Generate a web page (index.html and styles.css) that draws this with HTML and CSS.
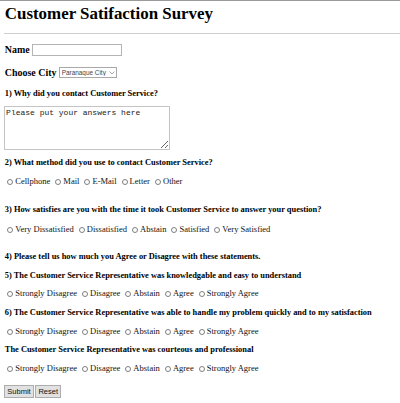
FILE: index.html
```html
<!DOCTYPE html>
<html lang="en">
<head>
<meta charset="utf-8">
<title>Customer Satifaction Survey</title>
<link rel="stylesheet" href="styles.css">
</head>
<body>
<form class="page">
  <h1 class="title">Customer Satifaction Survey</h1>
  <hr class="rule">
  <div class="field field-name">
    <label class="field-label" for="name">Name</label>
    <input class="text-input" id="name" type="text">
  </div>
  <div class="field field-city">
    <label class="field-label" for="city">Choose City</label>
    <span class="select-wrap">
      <select class="city-select" id="city">
        <option>Paranaque City</option>
      </select>
      <svg class="chevron" viewBox="0 0 10 6" width="10" height="6" aria-hidden="true"><path d="M1 1 L5 5 L9 1" fill="none" stroke="#8a8a8a" stroke-width="1.3"/></svg>
    </span>
  </div>
  <h4 class="question q1">1) Why did you contact Customer Service?</h4>
  <textarea class="answer" placeholder="Please put your answers here"></textarea>
  <h4 class="question q2">2) What method did you use to contact Customer Service?</h4>
  <div class="options o2">
    <label class="option"><input type="radio" name="method">Cellphone</label>
    <label class="option"><input type="radio" name="method">Mail</label>
    <label class="option"><input type="radio" name="method">E-Mail</label>
    <label class="option"><input type="radio" name="method">Letter</label>
    <label class="option"><input type="radio" name="method">Other</label>
  </div>
  <h4 class="question q3">3) How satisfies are you with the time it took Customer Service to answer your question?</h4>
  <div class="options o3">
    <label class="option"><input type="radio" name="time">Very Dissatisfied</label>
    <label class="option"><input type="radio" name="time">Dissatisfied</label>
    <label class="option"><input type="radio" name="time">Abstain</label>
    <label class="option"><input type="radio" name="time">Satisfied</label>
    <label class="option"><input type="radio" name="time">Very Satisfied</label>
  </div>
  <h4 class="question q4">4) Please tell us how much you Agree or Disagree with these statements.</h4>
  <h4 class="question q5">5) The Customer Service Representative was knowledgable and easy to understand</h4>
  <div class="options o5">
    <label class="option"><input type="radio" name="know">Strongly Disagree</label>
    <label class="option"><input type="radio" name="know">Disagree</label>
    <label class="option"><input type="radio" name="know">Abstain</label>
    <label class="option"><input type="radio" name="know">Agree</label>
    <label class="option"><input type="radio" name="know">Strongly Agree</label>
  </div>
  <h4 class="question q6">6) The Customer Service Representative was able to handle my problem quickly and to my satisfaction</h4>
  <div class="options o6">
    <label class="option"><input type="radio" name="handle">Strongly Disagree</label>
    <label class="option"><input type="radio" name="handle">Disagree</label>
    <label class="option"><input type="radio" name="handle">Abstain</label>
    <label class="option"><input type="radio" name="handle">Agree</label>
    <label class="option"><input type="radio" name="handle">Strongly Agree</label>
  </div>
  <h4 class="question q7">The Customer Service Representative was courteous and professional</h4>
  <div class="options o7">
    <label class="option"><input type="radio" name="court">Strongly Disagree</label>
    <label class="option"><input type="radio" name="court">Disagree</label>
    <label class="option"><input type="radio" name="court">Abstain</label>
    <label class="option"><input type="radio" name="court">Agree</label>
    <label class="option"><input type="radio" name="court">Strongly Agree</label>
  </div>
  <div class="buttons">
    <button class="btn" type="submit">Submit</button><button class="btn" type="reset">Reset</button>
  </div>
</form>
</body>
</html>
```
FILE: styles.css
```css
html {
  border-top: 1px solid #9a9a9a;
  background: #fff;
}

body {
  margin: 0;
}

.page {
  zoom: 0.6;
  display: flex;
  flex-direction: column;
  align-items: flex-start;
  padding: 0 0 0 8px;
  font-family: "Liberation Serif", "Times New Roman", serif;
  color: #000;
}

.title {
  margin: 4.2px 0 0;
  font-size: 28.2px;
  font-weight: bold;
  line-height: 1.15;
}

.rule {
  align-self: stretch;
  margin: 16.9px 0 0 -1px;
  border: 0;
  border-top: 2px solid #cfcfcf;
  height: 0;
}

.field {
  display: flex;
  align-items: center;
  gap: 4px;
}

.field-name {
  margin-top: 16px;
}

.field-city {
  margin-top: 17.5px;
}

.field-label {
  font-size: 16.6px;
  font-weight: bold;
  line-height: 1.15;
}

.text-input {
  width: 150px;
  height: 21px;
  box-sizing: border-box;
  margin: 0;
  padding: 1px 2px;
  border: 1.67px solid #b4b4b4;
  font-family: "Liberation Sans", Arial, sans-serif;
  font-size: 13.33px;
}

.select-wrap {
  position: relative;
  display: inline-flex;
}

.city-select {
  -webkit-appearance: none;
  appearance: none;
  height: 18.5px;
  margin: 0;
  padding: 0 16px 0 3px;
  border: 1.67px solid #a9a9a9;
  border-radius: 0;
  background: #fff;
  color: #444;
  font-family: "Liberation Sans", Arial, sans-serif;
  font-size: 10.7px;
}

.chevron {
  position: absolute;
  right: 4px;
  top: 7px;
  pointer-events: none;
}

.question {
  margin: 0;
  font-size: 14px;
  font-weight: bold;
  line-height: 1.15;
}

.q1 { margin-top: 17.7px; }
.q2 { margin-top: 13.3px; }
.q3 { margin-top: 28.3px; }
.q4 { margin-top: 26.7px; }
.q5 { margin-top: 16.1px; }
.q6 { margin-top: 14.2px; }
.q7 { margin-top: 13px; }

.answer {
  width: 277px;
  height: 73.5px;
  box-sizing: border-box;
  margin: 12.4px 0 0 -1.5px;
  padding: 2px;
  border: 3px solid #c4c4c4;
  font-family: "Liberation Mono", "Courier New", monospace;
  font-size: 13.33px;
}

.answer::placeholder {
  color: #222;
}

.options {
  display: flex;
  align-items: center;
  gap: 4.25px;
  height: 18.4px;
  font-size: 14.2px;
  line-height: 1.15;
  color: #111;
}

.o2 { margin-top: 15px; }
.o3 { margin-top: 17.6px; }
.o5 { margin-top: 12.8px; }
.o6 { margin-top: 14.2px; }
.o7 { margin-top: 15.1px; }

.option {
  display: inline-flex;
  align-items: center;
}

.option input {
  -webkit-appearance: none;
  appearance: none;
  box-sizing: border-box;
  width: 10px;
  height: 10px;
  margin: 0 3.5px 0 4px;
  border: 1.5px solid #808080;
  border-radius: 50%;
  background: #fff;
}

.buttons {
  display: flex;
  margin-top: 17.1px;
  margin-left: -1.5px;
}

.btn {
  height: 22px;
  margin: 0 1.67px 0 0;
  padding: 0 4px;
  border: 1.67px solid #adadad;
  border-radius: 0;
  background: #e1e1e1;
  color: #111;
  font-family: "Liberation Sans", Arial, sans-serif;
  font-size: 12.5px;
}
```
